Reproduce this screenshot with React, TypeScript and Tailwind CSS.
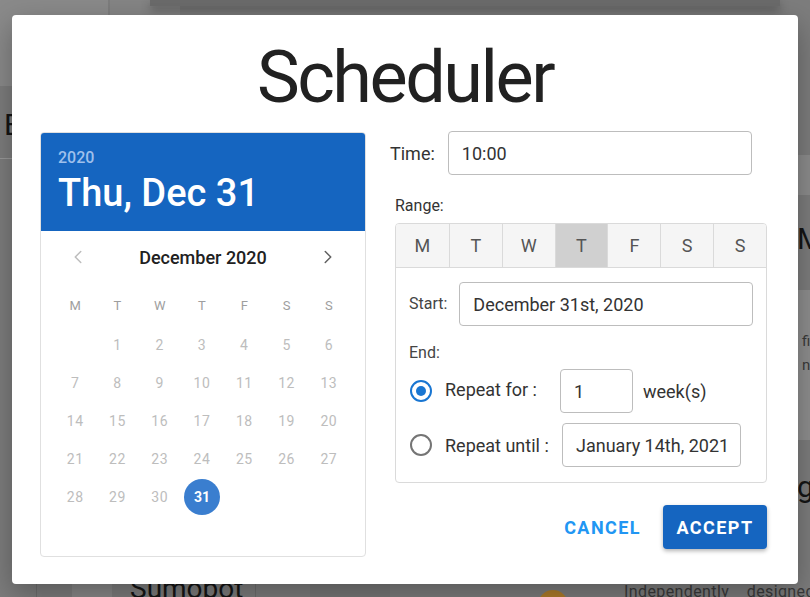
import React, { useState } from 'react';
import { ChevronLeft, ChevronRight } from 'lucide-react';

const WEEK = ['M', 'T', 'W', 'T', 'F', 'S', 'S'];

// December 2020 starts on a Tuesday (Monday-first grid)
const cells: (number | null)[] = [null, ...Array.from({ length: 31 }, (_, i) => i + 1)];

const Backdrop: React.FC = () => (
  <div className="absolute inset-0 overflow-hidden bg-[#7d7d7d]">
    <div className="absolute left-0 top-0 h-[86px] w-[108px] bg-[#8a8a8a]" />
    <div className="absolute left-[110px] top-0 h-[86px] w-[70px] bg-[#858585]" />
    <div className="absolute left-[150px] top-0 h-[6px] w-[630px] bg-[#6b6b6b] shadow-[0_4px_10px_rgba(0,0,0,0.35)]" />
    <div className="absolute left-0 top-[158px] h-px w-[40px] bg-[#999]" />
    <span className="absolute left-[4px] top-[102px] text-[30px] text-[#151515]">E</span>
    <div className="absolute right-0 top-[155px] h-[40px] w-[12px] bg-[#8c8c8c]" />
    <div className="absolute right-0 top-[290px] h-[150px] w-[12px] bg-[#8e8e8e]" />
    <span className="absolute left-[797px] top-[216px] text-[30px] text-[#151515]">M</span>
    <span className="absolute left-[802px] top-[330px] text-[15px] text-[#3a3a3a]">fi</span>
    <span className="absolute left-[802px] top-[354px] text-[15px] text-[#3a3a3a]">nt</span>
    <span className="absolute left-[797px] top-[464px] text-[30px] text-[#151515]">g</span>
    <div className="absolute left-[36px] top-[584px] h-[13px] w-px bg-[#6e6e6e]" />
    <div className="absolute left-[72px] top-[584px] h-[13px] w-[40px] bg-[#888]" />
    <div className="absolute left-[255px] top-[584px] h-[13px] w-px bg-[#6e6e6e]" />
    <div className="absolute left-[310px] top-[584px] h-[13px] w-[80px] bg-[#777]" />
    <span className="absolute left-[130px] top-[568px] text-[28px] text-[#151515]">Sumobot</span>
    <div className="absolute left-[538px] top-[590px] h-[30px] w-[30px] rounded-full bg-[#b07d2a]" />
    <span className="absolute left-[624px] top-[580px] text-[16px] tracking-wide text-[#3a3a3a]">
      Independently&nbsp;&nbsp;&nbsp;&nbsp;designed
    </span>
  </div>
);

const Field: React.FC<{ value: string; className?: string }> = ({ value, className }) => (
  <div
    className={`flex h-[44px] shrink-0 items-center whitespace-nowrap rounded border border-[#bdbdbd] bg-white px-[13px] text-[18px] text-[#333] ${className ?? ''}`}
  >
    {value}
  </div>
);

const Radio: React.FC<{ checked: boolean; onClick: () => void }> = ({ checked, onClick }) => (
  <button
    onClick={onClick}
    className={`ml-[1px] flex h-[22px] w-[22px] shrink-0 items-center justify-center rounded-full border-2 ${
      checked ? 'border-[#1976d2]' : 'border-[#757575]'
    }`}
  >
    {checked && <span className="h-[10px] w-[10px] rounded-full bg-[#1976d2]" />}
  </button>
);

export default function App() {
  const [days, setDays] = useState<boolean[]>([false, false, false, true, false, false, false]);
  const [mode, setMode] = useState<'for' | 'until'>('for');

  return (
    <div className="relative h-[597px] w-[810px] overflow-hidden font-['Roboto',sans-serif]">
      <Backdrop />

      <div className="relative px-[12px] pt-[15px]">
        <div className="h-[569px] rounded bg-white px-[28px] pt-[21px] shadow-[0_10px_30px_rgba(0,0,0,0.3)]">
          <h1 className="text-center text-[72px] leading-[84px] tracking-[-2.5px] text-[#212121]">Scheduler</h1>

          <div className="mt-[12px] flex gap-[24px] pr-[3px]">
            {/* date picker */}
            <div className="h-[425px] w-[326px] shrink-0 overflow-hidden rounded border border-[#e0e0e0]">
              <div className="h-[98px] bg-[#1565c0] px-[17px] pt-[15px]">
                <div className="text-[16px] font-medium leading-[20px] text-[#9fc0ec]">2020</div>
                <div className="mt-[2px] text-[38px] font-medium leading-[46px] text-white">Thu, Dec 31</div>
              </div>

              <div className="flex h-[55px] items-center justify-between px-[26px] pb-[3px]">
                <ChevronLeft size={22} strokeWidth={1.6} className="text-[#bdbdbd]" />
                <span className="text-[18px] font-medium text-[#212121]">December 2020</span>
                <ChevronRight size={22} strokeWidth={1.6} className="text-[#616161]" />
              </div>

              <div className="mx-auto grid w-[296px] -translate-x-[1px] grid-cols-7">
                {WEEK.map((d, i) => (
                  <div key={i} className="flex h-[40px] items-center justify-center text-[13px] text-[#9e9e9e]">
                    {d}
                  </div>
                ))}
              </div>
              <div className="mx-auto grid w-[296px] -translate-x-[1px] grid-cols-7">
                {cells.map((n, i) => (
                  <div key={i} className="flex h-[38px] items-center justify-center">
                    {n === 31 ? (
                      <span className="flex h-[36px] w-[36px] items-center justify-center rounded-full bg-[#3a7ecf] text-[14px] font-bold text-white">
                        31
                      </span>
                    ) : (
                      <span className="text-[14px] tracking-[0.5px] text-[#bdbdbd]">{n ?? ''}</span>
                    )}
                  </div>
                ))}
              </div>
            </div>

            {/* form */}
            <div className="-mt-[1px] flex-1">
              <div className="flex items-center gap-[13px] pr-[15px]">
                <span className="text-[18px] text-[#333]">Time:</span>
                <Field value="10:00" className="flex-1" />
              </div>

              <div className="pl-[5px]">
                <div className="mt-[22px] text-[16px] leading-[18px] text-[#333]">Range:</div>
                <div className="mt-[8px] overflow-hidden rounded border border-[#dadada]">
                  <div className="grid grid-cols-7 border-b border-[#dadada]">
                    {WEEK.map((d, i) => (
                      <button
                        key={i}
                        onClick={() => setDays(p => p.map((v, j) => (j === i ? !v : v)))}
                        className={`flex h-[43px] items-center justify-center text-[18px] text-[#555] ${
                          i > 0 ? 'border-l border-[#dadada]' : ''
                        } ${days[i] ? 'bg-[#d0d0d0]' : 'bg-[#f5f5f5]'}`}
                      >
                        {d}
                      </button>
                    ))}
                  </div>

                  <div className="px-[13px] pb-[15px] pt-[14px]">
                    <div className="flex items-center gap-[12px]">
                      <span className="text-[16px] text-[#444]">Start:</span>
                      <Field value="December 31st, 2020" className="flex-1" />
                    </div>

                    <div className="mt-[16px] text-[16px] leading-[22px] text-[#444]">End:</div>

                    <div className="mt-[5px] flex items-center">
                      <Radio checked={mode === 'for'} onClick={() => setMode('for')} />
                      <span className="ml-[13px] w-[115px] shrink-0 pb-[4px] text-[18px] text-[#333]">Repeat for :</span>
                      <Field value="1" className="w-[73px]" />
                      <span className="ml-[10px] text-[18px] text-[#333]">week(s)</span>
                    </div>

                    <div className="mt-[10px] flex items-center">
                      <Radio checked={mode === 'until'} onClick={() => setMode('until')} />
                      <span className="ml-[13px] w-[117px] shrink-0 text-[18px] text-[#333]">Repeat until :</span>
                      <Field value="January 14th, 2021" className="w-[179px]" />
                    </div>
                  </div>
                </div>

                <div className="mt-[22px] flex items-center justify-end gap-[22px]">
                  <button className="text-[18px] font-bold tracking-[0.08em] text-[#2196f3]">CANCEL</button>
                  <button className="h-[44px] w-[104px] rounded bg-[#1565c0] text-[18px] font-bold tracking-[0.08em] text-white shadow-[0_2px_4px_rgba(0,0,0,0.3)]">
                    ACCEPT
                  </button>
                </div>
              </div>
            </div>
          </div>
        </div>
      </div>
    </div>
  );
}
